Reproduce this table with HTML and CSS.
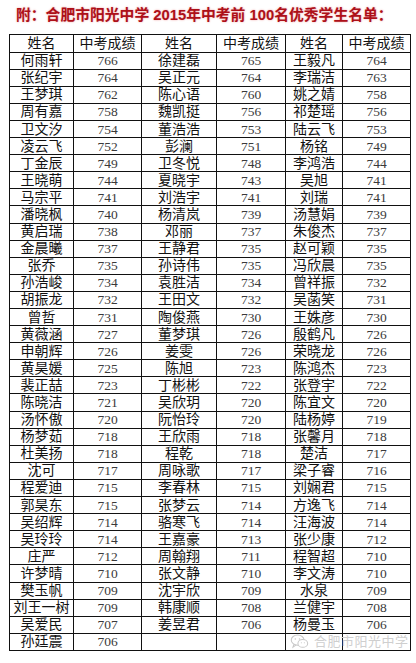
FILE: index.html
```html
<!DOCTYPE html>
<html lang="zh">
<head>
<meta charset="utf-8">
<link rel="stylesheet" href="styles.css">
</head>
<body>
<div class="title">附：合肥市阳光中学 2015年中考前 100名优秀学生名单：</div>
<div class="wrap">
<table class="list">
<colgroup><col class="c1"><col class="c2"><col class="c3"><col class="c4"><col class="c5"><col class="c6"></colgroup>
<thead>
<tr><th>姓名</th><th>中考成绩</th><th>姓名</th><th>中考成绩</th><th>姓名</th><th>中考成绩</th></tr>
</thead>
<tbody>
<tr><td>何雨轩</td><td class="s">766</td><td>徐建磊</td><td class="s">765</td><td>王毅凡</td><td class="s">764</td></tr>
<tr><td>张纪宇</td><td class="s">764</td><td>吴正元</td><td class="s">764</td><td>李瑞洁</td><td class="s">763</td></tr>
<tr><td>王梦琪</td><td class="s">762</td><td>陈心语</td><td class="s">760</td><td>姚之婧</td><td class="s">758</td></tr>
<tr><td>周有嘉</td><td class="s">758</td><td>魏凯挺</td><td class="s">756</td><td>祁楚瑶</td><td class="s">756</td></tr>
<tr><td>卫文汐</td><td class="s">754</td><td>董浩浩</td><td class="s">753</td><td>陆云飞</td><td class="s">753</td></tr>
<tr><td>凌云飞</td><td class="s">752</td><td>彭澜</td><td class="s">751</td><td>杨铭</td><td class="s">749</td></tr>
<tr><td>丁金辰</td><td class="s">749</td><td>卫冬悦</td><td class="s">748</td><td>李鸿浩</td><td class="s">744</td></tr>
<tr><td>王晓萌</td><td class="s">744</td><td>夏晓宇</td><td class="s">743</td><td>吴旭</td><td class="s">741</td></tr>
<tr><td>马宗平</td><td class="s">741</td><td>刘浩宇</td><td class="s">741</td><td>刘瑞</td><td class="s">741</td></tr>
<tr><td>潘晓枫</td><td class="s">740</td><td>杨清岚</td><td class="s">739</td><td>汤慧娟</td><td class="s">739</td></tr>
<tr><td>黄启瑞</td><td class="s">738</td><td>邓丽</td><td class="s">737</td><td>朱俊杰</td><td class="s">737</td></tr>
<tr><td>金晨曦</td><td class="s">737</td><td>王静君</td><td class="s">735</td><td>赵可颖</td><td class="s">735</td></tr>
<tr><td>张乔</td><td class="s">735</td><td>孙诗伟</td><td class="s">735</td><td>冯欣晨</td><td class="s">735</td></tr>
<tr><td>孙浩峻</td><td class="s">734</td><td>袁胜洁</td><td class="s">734</td><td>曾祥振</td><td class="s">732</td></tr>
<tr><td>胡振龙</td><td class="s">732</td><td>王田文</td><td class="s">732</td><td>吴菡笑</td><td class="s">731</td></tr>
<tr><td>曾哲</td><td class="s">731</td><td>陶俊燕</td><td class="s">730</td><td>王姝彦</td><td class="s">730</td></tr>
<tr><td>黄薇涵</td><td class="s">727</td><td>董梦琪</td><td class="s">726</td><td>殷鹤凡</td><td class="s">726</td></tr>
<tr><td>申朝辉</td><td class="s">726</td><td>姜雯</td><td class="s">726</td><td>荣晓龙</td><td class="s">726</td></tr>
<tr><td>黄昊媛</td><td class="s">725</td><td>陈旭</td><td class="s">723</td><td>陈鸿杰</td><td class="s">723</td></tr>
<tr><td>裴正喆</td><td class="s">723</td><td>丁彬彬</td><td class="s">722</td><td>张登宇</td><td class="s">722</td></tr>
<tr><td>陈晓洁</td><td class="s">721</td><td>吴欣玥</td><td class="s">720</td><td>陈宜文</td><td class="s">720</td></tr>
<tr><td>汤怀傲</td><td class="s">720</td><td>阮怡玲</td><td class="s">720</td><td>陆杨婷</td><td class="s">719</td></tr>
<tr><td>杨梦茹</td><td class="s">718</td><td>王欣雨</td><td class="s">718</td><td>张馨月</td><td class="s">718</td></tr>
<tr><td>杜美扬</td><td class="s">718</td><td>程乾</td><td class="s">718</td><td>楚洁</td><td class="s">717</td></tr>
<tr><td>沈可</td><td class="s">717</td><td>周咏歌</td><td class="s">717</td><td>梁子睿</td><td class="s">716</td></tr>
<tr><td>程爱迪</td><td class="s">715</td><td>李春林</td><td class="s">715</td><td>刘娴君</td><td class="s">715</td></tr>
<tr><td>郭昊东</td><td class="s">715</td><td>张梦云</td><td class="s">714</td><td>方逸飞</td><td class="s">714</td></tr>
<tr><td>吴绍辉</td><td class="s">714</td><td>骆寒飞</td><td class="s">714</td><td>汪海波</td><td class="s">714</td></tr>
<tr><td>吴玲玲</td><td class="s">714</td><td>王嘉豪</td><td class="s">713</td><td>张少康</td><td class="s">712</td></tr>
<tr><td>庄严</td><td class="s">712</td><td>周翰翔</td><td class="s">711</td><td>程智超</td><td class="s">710</td></tr>
<tr><td>许梦晴</td><td class="s">710</td><td>张文静</td><td class="s">710</td><td>李文涛</td><td class="s">710</td></tr>
<tr><td>樊玉帆</td><td class="s">709</td><td>沈宇欣</td><td class="s">709</td><td>水泉</td><td class="s">709</td></tr>
<tr><td>刘王一树</td><td class="s">709</td><td>韩康顺</td><td class="s">708</td><td>兰健宇</td><td class="s">708</td></tr>
<tr><td>吴爱民</td><td class="s">707</td><td>姜昱君</td><td class="s">706</td><td>杨曼玉</td><td class="s">706</td></tr>
<tr><td>孙廷震</td><td class="s">706</td><td></td><td></td><td></td><td></td></tr>
</tbody>
</table>
<div class="watermark">
<svg class="wm-icon" viewBox="0 0 20 16" width="19" height="15">
<ellipse cx="8" cy="6.5" rx="6.8" ry="5.4" fill="none" stroke="#c8c8c8" stroke-width="1.1"/>
<path d="M4 11 L3 14 L6.5 11.6" fill="none" stroke="#c8c8c8" stroke-width="1.1"/>
<ellipse cx="13.5" cy="10" rx="5.2" ry="4.2" fill="#fff" stroke="#c8c8c8" stroke-width="1.1"/>
<circle cx="5.5" cy="5.2" r="0.8" fill="#c8c8c8"/>
<circle cx="10" cy="5.2" r="0.8" fill="#c8c8c8"/>
<circle cx="12" cy="9.3" r="0.6" fill="#c8c8c8"/>
<circle cx="15.2" cy="9.3" r="0.6" fill="#c8c8c8"/>
</svg>
<span class="wm-text">合肥市阳光中学</span>
</div>
</div>
</body>
</html>
```
FILE: styles.css
```css
html, body {
  margin: 0;
  padding: 0;
  background: #fff;
}
body {
  width: 416px;
  font-family: "Liberation Sans", "Noto Sans CJK SC", sans-serif;
}
.title {
  height: 34px;
  box-sizing: border-box;
  padding: 5px 0 0 16px;
  font-family: "Liberation Sans", "Noto Sans CJK SC", sans-serif;
  font-size: 14.8px;
  line-height: 20px;
  font-weight: bold;
  color: #ad1019;
  text-shadow: 0 0 2px rgba(220, 40, 40, 0.45);
  white-space: nowrap;
}
.wrap {
  position: relative;
  margin-left: 9px;
  width: 401px;
}
.list {
  border-collapse: collapse;
  table-layout: fixed;
  width: 401px;
}
.c1 { width: 64px; }
.c2 { width: 68px; }
.c3 { width: 75px; }
.c4 { width: 69px; }
.c5 { width: 57px; }
.c6 { width: 68px; }
.list th,
.list td {
  border: 1px solid #111;
  padding: 0;
  height: 16.1px;
  text-align: center;
  vertical-align: middle;
  font-family: "Liberation Sans", "Noto Sans CJK SC", sans-serif;
  font-size: 14px;
  line-height: 15px;
  font-weight: normal;
  color: #111;
  white-space: nowrap;
}
.list th {
  height: 16.6px;
}
.list td.s {
  font-family: "Liberation Serif", serif;
  font-size: 13.5px;
  color: #3a3a3a;
}
.watermark {
  position: absolute;
  left: 281px;
  bottom: 1px;
  display: flex;
  align-items: center;
  gap: 5px;
  height: 16px;
}
.wm-text {
  font-family: "Liberation Sans", "Noto Sans CJK SC", sans-serif;
  font-size: 13px;
  line-height: 16px;
  color: #cfcfcf;
  letter-spacing: 0.5px;
}
```
